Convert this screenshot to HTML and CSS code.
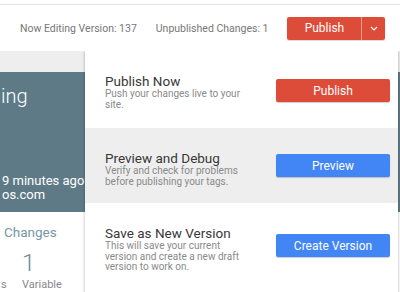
FILE: index.html
```html
<!DOCTYPE html>
<html lang="en">
<head>
    <meta charset="UTF-8">
    <meta name="viewport" content="width=device-width, initial-scale=1.0">
    <title>Workspace</title>
    <link rel="stylesheet" href="styles.css">
</head>
<body class="body">

    <div class="top">
        <div class="bar">
            <span class="meta">Now Editing Version: 137</span>
            <span class="meta">Unpublished Changes: 1</span>
            <div class="pubGroup">
                <button class="pubBtn">Publish</button>
                <button class="caretBtn">
                    <svg width="8" height="5" viewBox="0 0 8 5"><polyline points="1,1 4,4 7,1" fill="none" stroke="#fff" stroke-width="1.2"/></svg>
                </button>
            </div>
        </div>
    </div>

    <div class="content">
        <div class="strip"></div>

        <div class="card">
            <div class="cardTitle">ing</div>
            <div class="cardMeta">9 minutes ago<br>os.com</div>
        </div>

        <div class="stats">
            <div class="statsHead">Changes</div>
            <div class="statRow">
                <div class="stat first">
                    <span class="num">&nbsp;</span>
                    <span class="lbl">s</span>
                </div>
                <div class="stat">
                    <span class="num">1</span>
                    <span class="lbl">Variable</span>
                </div>
            </div>
        </div>

        <div class="menu">
            <div class="notch"></div>

            <div class="sec s1">
                <div class="secText">
                    <div class="secTitle">Publish Now</div>
                    <div class="secDesc">Push your changes live to your site.</div>
                </div>
                <button class="btn red">Publish</button>
            </div>

            <div class="sec s2">
                <div class="secText">
                    <div class="secTitle">Preview and Debug</div>
                    <div class="secDesc">Verify and check for problems before publishing your tags.</div>
                </div>
                <button class="btn blue">Preview</button>
            </div>

            <div class="sec s3">
                <div class="secText">
                    <div class="secTitle">Save as New Version</div>
                    <div class="secDesc">This will save your current version and create a new draft version to work on.</div>
                </div>
                <button class="btn blue">Create Version</button>
            </div>
        </div>
    </div>

</body>
</html>
```

FILE: styles.css
```css
.body{
    margin: 0;
    width: 400px;
    height: 292px;
    overflow: hidden;
    background-color: #fff;
    font-family: Roboto, "Liberation Sans", sans-serif;
}
.top{
    padding-top: 4px;
}
.bar{
    border-top: 1px solid #e3e3e3;
    height: 46px;
    display: flex;
    align-items: center;
    padding-left: 20px;
    padding-right: 15px;
}
.meta{
    font-size: 10.5px;
    color: #777;
    margin-right: 19px;
    white-space: nowrap;
}
.pubGroup{
    margin-left: auto;
    display: flex;
    height: 23px;
    border-radius: 2px;
    overflow: hidden;
    box-shadow: 0 1px 1px rgba(0,0,0,0.15);
}
.pubBtn, .caretBtn{
    border: none;
    background-color: #dd4b39;
    color: #fff;
    font-family: Roboto, "Liberation Sans", sans-serif;
    font-size: 12px;
    padding: 0;
    height: 23px;
}
.pubBtn{
    width: 75px;
}
.caretBtn{
    width: 24px;
    border-left: 1px solid rgba(255,255,255,0.45);
    display: flex;
    align-items: center;
    justify-content: center;
}
.content{
    position: relative;
    height: 241px;
    overflow: hidden;
}
.strip{
    height: 21px;
    background-color: #eeeeee;
}
.card{
    height: 140px;
    background-color: #5e7a87;
    color: #fff;
    box-sizing: border-box;
    padding-top: 11px;
}
.cardTitle{
    font-size: 20px;
    font-weight: 300;
    line-height: 26px;
    padding-left: 1px;
}
.cardMeta{
    margin-top: 65px;
    font-size: 13px;
    line-height: 14px;
    padding-left: 2px;
}
.stats{
    padding-top: 11px;
}
.statsHead{
    font-size: 13.5px;
    line-height: 18px;
    color: #7596a5;
    padding-left: 4px;
}
.statRow{
    display: flex;
    margin-top: 8px;
}
.stat{
    display: flex;
    flex-direction: column;
}
.stat.first{
    width: 22px;
    padding-left: 1px;
    box-sizing: border-box;
}
.num{
    font-size: 24px;
    font-weight: 300;
    line-height: 28px;
    color: #6f8a97;
}
.lbl{
    font-size: 11px;
    line-height: 14px;
    color: #888;
    margin-top: 1px;
}
.menu{
    position: absolute;
    left: 85px;
    top: 0;
    width: 313px;
    height: 250px;
    background-color: #fff;
    box-shadow: 0 0 3px rgba(0,0,0,0.3);
}
.notch{
    position: absolute;
    top: -5px;
    right: 7px;
    width: 10px;
    height: 10px;
    background-color: #fff;
    transform: rotate(45deg);
    box-shadow: 0 0 3px rgba(0,0,0,0.3);
}
.sec{
    position: relative;
    display: flex;
    align-items: flex-start;
    box-sizing: border-box;
    padding: 23px 8px 0 20px;
    background-color: #fff;
}
.s1{
    height: 77px;
}
.s2{
    height: 75px;
    background-color: #eeeeee;
}
.s3{
    height: 98px;
}
.secText{
    width: 142px;
}
.secTitle{
    font-size: 13.5px;
    line-height: 15px;
    color: #383838;
}
.secDesc{
    font-size: 10px;
    line-height: 10.5px;
    color: #8a8a8a;
}
.btn{
    margin-left: auto;
    align-self: flex-start;
    width: 114px;
    height: 23px;
    border: none;
    border-radius: 2px;
    color: #fff;
    font-family: Roboto, "Liberation Sans", sans-serif;
    font-size: 12px;
    padding: 0;
    box-shadow: 0 1px 1px rgba(0,0,0,0.2);
}
.red{
    background-color: #dd4b39;
}
.blue{
    background-color: #4285f4;
}
.s1 .btn{
    margin-top: 5px;
}
.s2 .btn{
    margin-top: 3px;
}
.s3 .btn{
    margin-top: 8px;
}
```
